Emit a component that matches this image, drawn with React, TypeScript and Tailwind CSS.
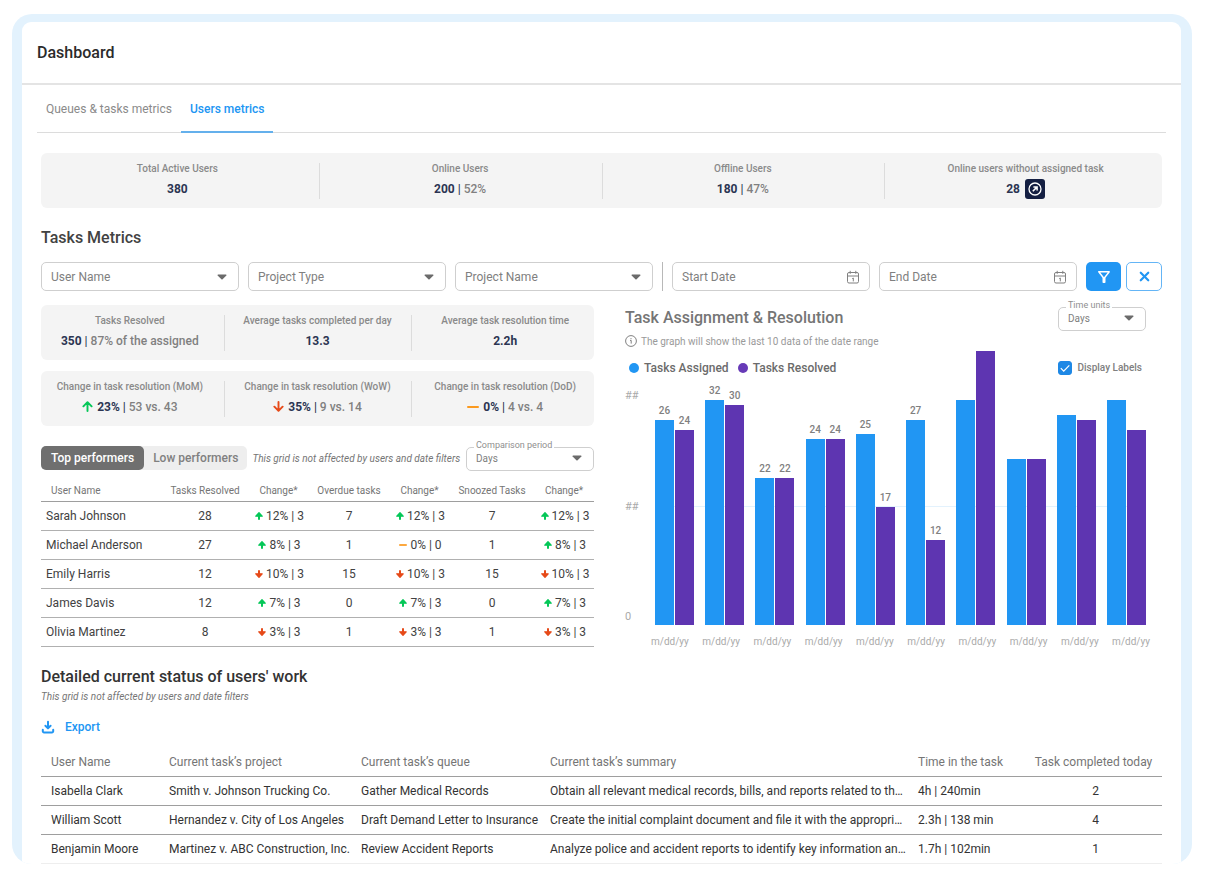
import type { ReactNode } from "react";
import { MdOutlineFilterAlt } from "react-icons/md";
import { X } from "lucide-react";

type Trend = "up" | "down" | "flat";

const filters = ["User Name", "Project Type", "Project Name"];

const performers: { name: string; cells: [string, Trend, string][] }[] = [
    { name: "Sarah Johnson", cells: [["28", "up", "12% | 3"], ["7", "up", "12% | 3"], ["7", "up", "12% | 3"]] },
    { name: "Michael Anderson", cells: [["27", "up", "8% | 3"], ["1", "flat", "0% | 0"], ["1", "up", "8% | 3"]] },
    { name: "Emily Harris", cells: [["12", "down", "10% | 3"], ["15", "down", "10% | 3"], ["15", "down", "10% | 3"]] },
    { name: "James Davis", cells: [["12", "up", "7% | 3"], ["0", "up", "7% | 3"], ["0", "up", "7% | 3"]] },
    { name: "Olivia Martinez", cells: [["8", "down", "3% | 3"], ["1", "down", "3% | 3"], ["1", "down", "3% | 3"]] },
];

// bar heights in px, label is optional
const bars = [
    { assigned: 205, resolved: 195, labels: ["26", "24"] },
    { assigned: 225, resolved: 220, labels: ["32", "30"] },
    { assigned: 147, resolved: 147, labels: ["22", "22"] },
    { assigned: 186, resolved: 186, labels: ["24", "24"] },
    { assigned: 191, resolved: 118, labels: ["25", "17"] },
    { assigned: 205, resolved: 85, labels: ["27", "12"] },
    { assigned: 225, resolved: 274, labels: ["", ""] },
    { assigned: 166, resolved: 166, labels: ["", ""] },
    { assigned: 210, resolved: 205, labels: ["", ""] },
    { assigned: 225, resolved: 195, labels: ["", ""] },
];

const work = [
    {
        user: "Isabella Clark",
        project: "Smith v. Johnson Trucking Co.",
        queue: "Gather Medical Records",
        summary: "Obtain all relevant medical records, bills, and reports related to th…",
        time: "4h | 240min",
        completed: 2,
    },
    {
        user: "William Scott",
        project: "Hernandez v. City of Los Angeles",
        queue: "Draft Demand Letter to Insurance",
        summary: "Create the initial complaint document and file it with the appropri…",
        time: "2.3h | 138 min",
        completed: 4,
    },
    {
        user: "Benjamin Moore",
        project: "Martinez v. ABC Construction, Inc.",
        queue: "Review Accident Reports",
        summary: "Analyze police and accident reports to identify key information an…",
        time: "1.7h | 102min",
        completed: 1,
    },
];

function Caret() {
    return (
        <svg viewBox="0 0 10 6" className="pointer-events-none absolute right-3 top-1/2 h-[6px] w-[10px] -translate-y-1/2">
            <path d="M1 0.5h8a.6.6 0 0 1 .4 1L5.6 5.2a.9.9 0 0 1-1.2 0L.6 1.5a.6.6 0 0 1 .4-1z" fill="#6b6b6b" />
        </svg>
    );
}

function CalendarIcon() {
    return (
        <svg viewBox="0 0 14 14" className="pointer-events-none absolute right-[10px] top-1/2 h-[14px] w-[14px] -translate-y-1/2" fill="none" stroke="#808080">
            <rect x="1.5" y="2.5" width="11" height="10.5" rx="1.5" />
            <path d="M1.5 6h11M4.2 0.8v3M9.8 0.8v3" />
            <path d="M6.2 8.6l1.1-.6v3.4" />
        </svg>
    );
}

function TrendArrow({ trend }: { trend: Trend }) {
    if (trend === "flat") {
        return (
            <svg viewBox="0 0 12 12" className="h-3 w-3" fill="none">
                <path d="M1 6h10" stroke="#fb9a1f" strokeWidth="2" strokeLinecap="round" />
            </svg>
        );
    }
    return (
        <svg viewBox="0 0 12 12" className={trend === "up" ? "h-[11px] w-[11px] text-[#05c758]" : "h-[11px] w-[11px] rotate-180 text-[#e64a19]"} fill="none" stroke="currentColor" strokeWidth="2.1" strokeLinecap="round" strokeLinejoin="round">
            <path d="M6 10.9V1.6M1.5 5.8L6 1.3l4.5 4.5" />
        </svg>
    );
}

function SmallTrend({ trend }: { trend: Trend }) {
    if (trend === "flat") {
        return (
            <svg viewBox="0 0 8 8" className="h-2 w-2">
                <path d="M0.8 4h6.4" stroke="#fb8c00" strokeWidth="1.6" strokeLinecap="round" />
            </svg>
        );
    }
    return (
        <svg viewBox="0 0 8 8" className={trend === "up" ? "h-2 w-2 text-[#05c758]" : "h-2 w-2 rotate-180 text-[#e64a19]"}>
            <path d="M4 0.8L7.2 4.2H0.8z" fill="currentColor" stroke="currentColor" strokeWidth="1.3" strokeLinejoin="round" />
            <path d="M4 3v4" stroke="currentColor" strokeWidth="2" strokeLinecap="round" />
        </svg>
    );
}

function StatStrip({ children }: { children: ReactNode }) {
    return <dl className="flex h-[55px] items-center gap-[10px] rounded-md bg-[#f4f4f4]">{children}</dl>;
}

function Stat({ label, value, note, trend, action, first }: { label: string; value: string; note?: string; trend?: Trend; action?: ReactNode; first?: boolean }) {
    return (
        <div className="relative flex flex-1 flex-col items-center">
            {!first && <span className="absolute -left-[5px] top-0.5 h-9 w-px bg-[#dcdcdc]" />}
            <dt className="text-[10px] font-medium leading-4 whitespace-nowrap text-[#8a8a8a]">{label}</dt>
            <dd className="flex h-6 items-center text-xs font-medium whitespace-nowrap text-[#808080]">
                {trend && <span className="mr-1"><TrendArrow trend={trend} /></span>}
                <span>
                    <b className="font-bold text-[#2b3452]">{value}</b>
                    {note && <><span className="text-[#2b3452]"> | </span>{note}</>}
                </span>
                {action}
            </dd>
        </div>
    );
}

function OutlinedSelect({ id, label, className }: { id: string; label: string; className: string }) {
    return (
        <div className={`relative ${className}`}>
            <label htmlFor={id} className="absolute -top-2 left-2 bg-white px-0.5 text-[9px] leading-4 whitespace-nowrap text-[#8f8f8f]">{label}</label>
            <select id={id} className="h-6 w-full appearance-none rounded-[5px] border border-[#cfcfcf] bg-transparent pl-[9px] text-[10px] text-[#808080]">
                <option>Days</option>
            </select>
            <Caret />
        </div>
    );
}

function Bar({ height, label, color }: { height: number; label: string; color: string }) {
    return (
        <div className="flex w-[19px] shrink-0 flex-col items-center">
            {label && <span className="pb-[3px] text-[10px] font-medium leading-3 text-[#808080]">{label}</span>}
            <div className={`w-full ${color}`} style={{ height }} />
        </div>
    );
}

export default function App() {
    return (
        <div className="bg-white pb-3 pl-3 pr-[15px] pt-[14px] font-['Roboto',sans-serif] text-[#424242]">
            <div className="overflow-hidden rounded-[20px] bg-[#e3f2fd] pl-[10px] pr-[11px] pt-2">
                <main className="rounded-t-[9px] bg-white">
                    <header className="flex h-[63px] items-center border-b-2 border-[#e4e4e4] px-[15px]">
                        <h1 className="text-base font-medium text-[#2b2b2b]">Dashboard</h1>
                    </header>

                    <nav className="mx-[15px] flex h-12 border-b border-[#dcdcdc] text-xs">
                        <a href="#queues" className="flex h-12 items-center px-[9px] text-[#8a8a8a]">Queues & tasks metrics</a>
                        <a href="#users" className="flex h-12 items-center border-b-2 border-[#64b0ec] px-[9px] pt-0.5 font-medium text-[#2196f3]">Users metrics</a>
                    </nav>

                    <div className="px-[19px] pt-5">
                        <StatStrip>
                            <Stat first label="Total Active Users" value="380" />
                            <Stat label="Online Users" value="200" note="52%" />
                            <Stat label="Offline Users" value="180" note="47%" />
                            <Stat
                                label="Online users without assigned task"
                                value="28"
                                action={
                                    <button aria-label="Open users" className="ml-[5px] flex h-5 w-5 items-center justify-center rounded-[3px] bg-[#141f42]">
                                        <svg viewBox="0 0 14 14" className="h-[14px] w-[14px]" fill="none" stroke="#fff">
                                            <circle cx="7" cy="7" r="6" strokeWidth="1.3" />
                                            <path d="M4.8 9.2l3.6-3.6M5.4 4.9h3.7v3.7" strokeWidth="1.5" />
                                        </svg>
                                    </button>
                                }
                            />
                        </StatStrip>

                        <h2 className="mt-5 text-base font-medium leading-5 text-[#424242]">Tasks Metrics</h2>

                        {/* Filters */}
                        <form className="mt-[14px] flex h-[29px] gap-[9px]">
                            {filters.map((name) => (
                                <div key={name} className="relative flex-1">
                                    <select aria-label={name} className="h-full w-full appearance-none rounded-[5px] border border-[#cfcfcf] bg-transparent pl-[9px] text-xs text-[#808080]">
                                        <option>{name}</option>
                                    </select>
                                    <Caret />
                                </div>
                            ))}
                            <span className="w-px bg-[#b8b8b8]" />
                            {["Start Date", "End Date"].map((name) => (
                                <div key={name} className="relative flex-1">
                                    <input type="text" aria-label={name} placeholder={name} className="h-full w-full rounded-[5px] border border-[#cfcfcf] bg-transparent pl-[9px] text-xs placeholder:text-[#808080]" />
                                    <CalendarIcon />
                                </div>
                            ))}
                            <div className="flex gap-[5px]">
                                <button type="button" aria-label="Apply filters" className="flex w-[35px] items-center justify-center rounded-[5px] bg-[#2196f3] text-white">
                                    <MdOutlineFilterAlt className="h-[18px] w-[18px]" />
                                </button>
                                <button type="button" aria-label="Clear filters" className="flex w-9 items-center justify-center rounded-[5px] border border-[#64b5f6] text-[#2196f3]">
                                    <X className="h-[15px] w-[15px]" strokeWidth={3.5} />
                                </button>
                            </div>
                        </form>

                        <div className="mt-[14px] grid grid-cols-[553fr_537fr] gap-[31px]">
                            <section>
                                <StatStrip>
                                    <Stat first label="Tasks Resolved" value="350" note="87% of the assigned" />
                                    <Stat label="Average tasks completed per day" value="13.3" />
                                    <Stat label="Average task resolution time" value="2.2h" />
                                </StatStrip>
                                <div className="mt-[11px]">
                                    <StatStrip>
                                        <Stat first label="Change in task resolution (MoM)" value="23%" note="53 vs. 43" trend="up" />
                                        <Stat label="Change in task resolution (WoW)" value="35%" note="9 vs. 14" trend="down" />
                                        <Stat label="Change in task resolution (DoD)" value="0%" note="4 vs. 4" trend="flat" />
                                    </StatStrip>
                                </div>

                                <div className="mt-5 flex h-6 items-center">
                                    <div className="flex h-6 rounded-[5px] bg-[#eeeeee] text-xs font-medium">
                                        <button className="rounded-[5px] bg-[#6f6f6f] px-[10px] whitespace-nowrap text-white">Top performers</button>
                                        <button className="px-[9px] whitespace-nowrap text-[#808080]">Low performers</button>
                                    </div>
                                    <p className="ml-[5px] text-[10px] italic whitespace-nowrap text-[#757575]">This grid is not affected by users and date filters</p>
                                    <OutlinedSelect id="comparison" label="Comparison period" className="ml-auto w-32" />
                                </div>

                                <table className="w-full table-fixed text-center text-xs">
                                    <colgroup>
                                        <col />
                                        <col className="w-[86px]" />
                                        <col className="w-[61px]" />
                                        <col className="w-[80px]" />
                                        <col className="w-[61px]" />
                                        <col className="w-[84px]" />
                                        <col className="w-[60px]" />
                                    </colgroup>
                                    <thead>
                                        <tr className="h-[31px] border-b border-[#9e9e9e] text-[10px] whitespace-nowrap text-[#757575]">
                                            <th className="pl-[10px] pt-[10px] text-left font-normal">User Name</th>
                                            <th className="pt-[10px] font-normal">Tasks Resolved</th>
                                            <th className="pt-[10px] font-normal">Change*</th>
                                            <th className="pt-[10px] font-normal">Overdue tasks</th>
                                            <th className="pt-[10px] font-normal">Change*</th>
                                            <th className="pt-[10px] font-normal">Snoozed Tasks</th>
                                            <th className="pt-[10px] font-normal">Change*</th>
                                        </tr>
                                    </thead>
                                    <tbody>
                                        {performers.map((row) => (
                                            <tr key={row.name} className="h-[29px] border-b border-[#b0b0b0] whitespace-nowrap">
                                                <td className="pl-[5px] text-left">{row.name}</td>
                                                {row.cells.map(([count, trend, change], i) => [
                                                    <td key={`count-${i}`}>{count}</td>,
                                                    <td key={`change-${i}`}>
                                                        <span className="flex items-center justify-center gap-[3px] pl-0.5">
                                                            <SmallTrend trend={trend} />
                                                            {change}
                                                        </span>
                                                    </td>,
                                                ])}
                                            </tr>
                                        ))}
                                    </tbody>
                                </table>
                            </section>

                            {/* Chart */}
                            <section>
                                <div className="flex h-[26px] items-center justify-between pr-4">
                                    <h2 className="text-base font-medium text-[#757575]">Task Assignment & Resolution</h2>
                                    <OutlinedSelect id="units" label="Time units" className="w-[88px]" />
                                </div>
                                <p className="mt-0.5 flex h-4 items-center gap-1 text-[10px] text-[#9a9a9a]">
                                    <svg viewBox="0 0 12 12" className="h-3 w-3" fill="none" stroke="#808080">
                                        <circle cx="6" cy="6" r="5.4" />
                                        <path d="M5 5.4h1.2v3.2M6 3.1v1.1" />
                                    </svg>
                                    The graph will show the last 10 data of the date range
                                </p>
                                <div className="mt-[11px] flex h-4 items-center pl-1 pr-5 text-xs font-medium text-[#6b6b6b]">
                                    <span className="mr-[5px] h-[10px] w-[10px] rounded-full bg-[#2196f3]" />
                                    Tasks Assigned
                                    <span className="ml-[9px] mr-[5px] h-[10px] w-[10px] rounded-full bg-[#673ab7]" />
                                    Tasks Resolved
                                    <label className="ml-auto flex items-center gap-[5px] text-[10px] text-[#808080]">
                                        <span className="relative h-[14px] w-[14px]">
                                            <input type="checkbox" defaultChecked className="block h-[14px] w-[14px] appearance-none rounded-[3px] border border-[#1e88e5] checked:bg-[#1e88e5]" />
                                            <svg viewBox="0 0 14 14" className="pointer-events-none absolute inset-0" fill="none" stroke="#fff" strokeWidth="1.2">
                                                <path d="M2.8 7.2l2.9 2.9 5.6-5.8" />
                                            </svg>
                                        </span>
                                        Display Labels
                                    </label>
                                </div>

                                <div className="flex h-[249px]">
                                    <div className="flex w-[30px] flex-col justify-between pt-3 text-[11px] leading-4 text-[#aaaaaa]">
                                        <span>##</span>
                                        <span>##</span>
                                        <span>0</span>
                                    </div>
                                    <div className="relative mr-4 flex flex-1 items-end justify-between">
                                        <span className="absolute bottom-[118px] left-0 h-px w-full bg-[#e3f2fd]" />
                                        {bars.map((bar, i) => (
                                            <div key={i} className="relative flex items-end gap-px">
                                                <Bar height={bar.assigned} label={bar.labels[0]} color="bg-[#2196f3]" />
                                                <Bar height={bar.resolved} label={bar.labels[1]} color="bg-[#5e35b1]" />
                                            </div>
                                        ))}
                                    </div>
                                </div>
                                <div className="mt-[9px] flex justify-between pl-[26px] pr-3 text-[10px] leading-4 text-[#aaaaaa]">
                                    {bars.map((_, i) => (
                                        <span key={i}>m/dd/yy</span>
                                    ))}
                                </div>
                            </section>
                        </div>

                        <h2 className="mt-[17px] text-base font-medium leading-5 text-[#333333]">Detailed current status of users' work</h2>
                        <p className="mt-0.5 text-[10px] italic leading-4 text-[#757575]">This grid is not affected by users and date filters</p>

                        <button className="mt-3 flex h-5 items-center gap-[10px] text-xs font-medium text-[#2196f3]">
                            <svg viewBox="0 0 14 14" className="h-[14px] w-[14px]" fill="none" stroke="currentColor" strokeWidth="2" strokeLinecap="round" strokeLinejoin="round">
                                <path d="M7 1.8v6M4.4 5.8L7 8.4l2.6-2.6" />
                                <path d="M1.8 9.8v1.4a1.2 1.2 0 0 0 1.2 1.2h8a1.2 1.2 0 0 0 1.2-1.2V9.8" />
                            </svg>
                            Export
                        </button>

                        <table className="mt-2 w-full table-fixed text-left text-xs">
                            <colgroup>
                                <col className="w-[118px]" />
                                <col className="w-[192px]" />
                                <col className="w-[189px]" />
                                <col />
                                <col className="w-[117px]" />
                                <col className="w-[137px]" />
                            </colgroup>
                            <thead>
                                <tr className="h-[31px] border-b border-[#9e9e9e] whitespace-nowrap text-[#757575]">
                                    <th className="pl-[10px] pt-1 font-normal">User Name</th>
                                    <th className="pl-[10px] pt-1 font-normal">Current task’s project</th>
                                    <th className="pl-[10px] pt-1 font-normal">Current task’s queue</th>
                                    <th className="pl-[10px] pt-1 font-normal">Current task’s summary</th>
                                    <th className="pl-[10px] pt-1 font-normal">Time in the task</th>
                                    <th className="pt-1 text-center font-normal">Task completed today</th>
                                </tr>
                            </thead>
                            <tbody>
                                {work.map((row) => (
                                    <tr key={row.user} className="h-[29px] border-b border-[#9e9e9e] whitespace-nowrap text-[#333333] last:border-[#eeeeee]">
                                        <td className="pl-[10px]">{row.user}</td>
                                        <td className="pl-[10px]">{row.project}</td>
                                        <td className="pl-[10px]">{row.queue}</td>
                                        <td className="pl-[10px]">{row.summary}</td>
                                        <td className="pl-[10px]">{row.time}</td>
                                        <td className="pl-1 text-center">{row.completed}</td>
                                    </tr>
                                ))}
                            </tbody>
                        </table>
                    </div>
                </main>
            </div>
        </div>
    );
}
